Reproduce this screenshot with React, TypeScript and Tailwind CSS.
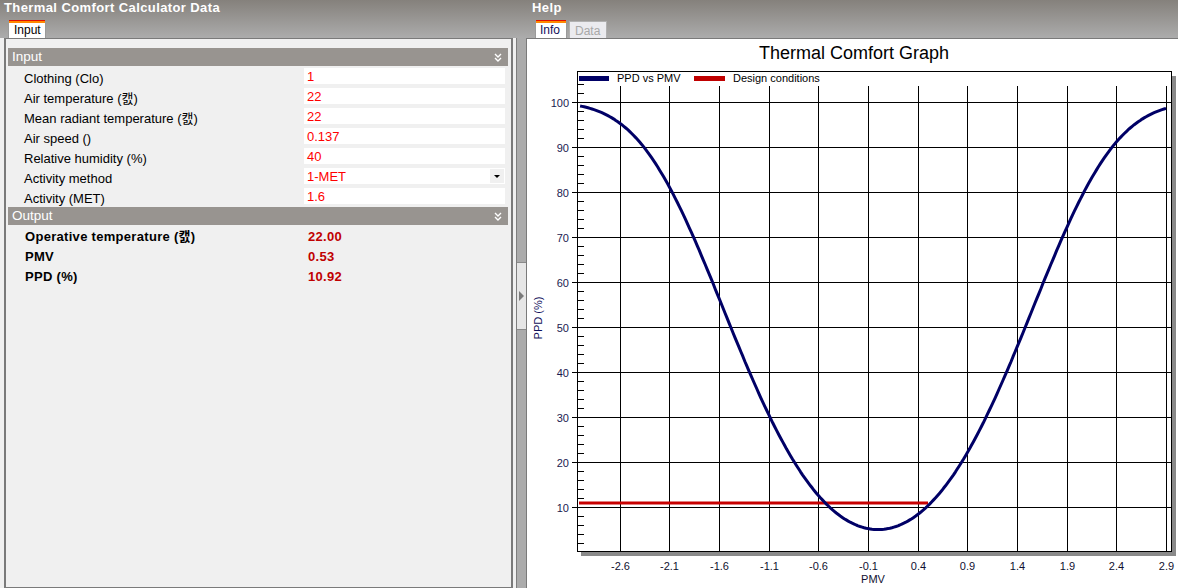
import React from "react";

const ppd = (p: number) => 100 - 95 * Math.exp(-0.03353 * p ** 4 - 0.2179 * p * p);
const X = (p: number) => 878 + 99.3 * p;
const Y = (v: number) => 552 - 4.5 * v;

function Chevron() {
  return (
    <svg width="8" height="9" viewBox="0 0 8 9" className="block">
      <path d="M1 1 L4 4 L7 1 M1 5 L4 8 L7 5" stroke="#ffffff" strokeWidth="1.4" fill="none" />
    </svg>
  );
}

function Chart() {
  const pts: string[] = [];
  for (let i = 0; i <= 295; i++) {
    const p = -3.0 + i * 0.02;
    pts.push(`${X(p).toFixed(1)},${Y(ppd(p)).toFixed(1)}`);
  }
  const xt = [-2.6, -2.1, -1.6, -1.1, -0.6, -0.1, 0.4, 0.9, 1.4, 1.9, 2.4, 2.9];
  const yt = [10, 20, 30, 40, 50, 60, 70, 80, 90, 100];
  const minor: number[] = [];
  for (let v = 2; v <= 104; v += 2) if (v % 10 !== 0) minor.push(v);
  return (
    <svg width="651" height="549" viewBox="527 39 651 549" className="block" style={{ fontFamily: "'Liberation Sans', Arial, sans-serif" }}>
      <text x="854" y="59" textAnchor="middle" fontSize="18" fill="#000">Thermal Comfort Graph</text>
      {/* shadow */}
      <rect x="1172" y="76" width="4" height="480" fill="#8a8a8a" />
      <rect x="581" y="552" width="595" height="4" fill="#8a8a8a" />
      {/* frame */}
      <rect x="577.5" y="71.5" width="594" height="480" fill="#fff" stroke="#000" strokeWidth="1" />
      {/* horizontal grid */}
      {yt.map((v) => (
        <g key={v}>
          <line x1="572" x2="1171.5" y1={Math.round(Y(v)) + 0.5} y2={Math.round(Y(v)) + 0.5} stroke="#000" strokeWidth="1" />
          <text x="569" y={Math.round(Y(v)) + 4.5} textAnchor="end" fontSize="11" fill="#1a1a50">{v}</text>
        </g>
      ))}
      {minor.map((v) => (
        <line key={v} x1="577" x2="584" y1={Math.round(Y(v)) + 0.5} y2={Math.round(Y(v)) + 0.5} stroke="#000" strokeWidth="1" />
      ))}
      {/* vertical grid */}
      {xt.map((p) => (
        <g key={p}>
          <line x1={Math.round(X(p)) + 0.5} x2={Math.round(X(p)) + 0.5} y1="86" y2="551.5" stroke="#000" strokeWidth="1" />
          <text x={Math.round(X(p)) + 0.5} y="570" textAnchor="middle" fontSize="11" fill="#101030">{p.toFixed(1)}</text>
        </g>
      ))}
      {/* legend */}
      <rect x="579" y="76" width="30" height="5" fill="#000066" />
      <text x="617" y="82" fontSize="11" fill="#000">PPD vs PMV</text>
      <rect x="694" y="76" width="31" height="5" fill="#c00000" />
      <text x="733" y="82" fontSize="11" fill="#000">Design conditions</text>
      {/* curves */}
      <line x1="579" x2="928" y1="503" y2="503" stroke="#c80000" strokeWidth="3" />
      <polyline points={pts.join(" ")} fill="none" stroke="#000066" strokeWidth="3" strokeLinejoin="round" />
      {/* axis titles */}
      <text x="873" y="583" textAnchor="middle" fontSize="11" fill="#101030">PMV</text>
      <text x="0" y="0" transform="translate(542 318) rotate(-90)" textAnchor="middle" fontSize="11" fill="#10105a">PPD (%)</text>
    </svg>
  );
}

const inputs: [string, string, boolean?][] = [
  ["Clothing (Clo)", "1"],
  ["Air temperature (캜)", "22"],
  ["Mean radiant temperature (캜)", "22"],
  ["Air speed ()", "0.137"],
  ["Relative humidity (%)", "40"],
  ["Activity method", "1-MET", true],
  ["Activity (MET)", "1.6"],
];

const outputs: [string, string][] = [
  ["Operative temperature (캜)", "22.00"],
  ["PMV", "0.53"],
  ["PPD (%)", "10.92"],
];

export default function App() {
  return (
    <div className="flex w-[1178px] h-[588px] overflow-hidden bg-[#f0f0f0] font-['Liberation_Sans','Noto_Sans_CJK_KR',Arial,sans-serif] text-[13px] text-black">
      {/* left column */}
      <div className="flex flex-col w-[514px] h-full">
        <div className="h-[38px] bg-gradient-to-b from-[#85817c] to-[#acacac] flex flex-col">
          <div className="h-[20px] pl-[4px] leading-[16px] font-bold text-white text-[13px] tracking-[0.4px]">Thermal Comfort Calculator Data</div>
          <div className="flex pl-[8px]">
            <div className="w-[38px] h-[18px] bg-white border-x border-[#9a9a9a] flex flex-col">
              <div className="h-[1px] bg-[#e01000]" />
              <div className="h-[2px] bg-[#ff8a00]" />
              <div className="pl-[5px] text-[12px] leading-[14px]">Input</div>
            </div>
          </div>
        </div>
        <div className="ml-[4px] w-[509px] flex-1 border-l-2 border-r-2 border-y border-[#7a7a7a] bg-[#f0f0f0] pt-[9px] pl-[2px] pr-[3px]">
          <div className="h-[18px] bg-[#989490] flex items-center justify-between pl-[4px] pr-[6px] text-white text-[13.5px]">
            <span>Input</span>
            <Chevron />
          </div>
          {inputs.map(([l, v, dd]) => (
            <div key={l} className="h-[20px] flex">
              <div className="w-[296px] pl-[16px] leading-[20px] pt-[3px]">{l}</div>
              <div className="mt-[2px] w-[201px] h-[16px] bg-white flex items-center justify-between">
                <span className="pl-[3px] text-[#ff0000] leading-[16px] pt-[1px]">{v}</span>
                {dd && (
                  <div className="w-[14px] h-[14px] bg-[#f0f0f0] flex items-center justify-center mr-[1px]">
                    <div className="w-0 h-0 border-l-[3px] border-r-[3px] border-t-[3px] border-l-transparent border-r-transparent border-t-black" />
                  </div>
                )}
              </div>
            </div>
          ))}
          <div className="mt-[1px] h-[18px] bg-[#989490] flex items-center justify-between pl-[4px] pr-[6px] text-white text-[13.5px]">
            <span>Output</span>
            <Chevron />
          </div>
          {outputs.map(([l, v]) => (
            <div key={l} className="h-[20px] flex font-bold leading-[20px] pt-[2px]">
              <div className="w-[300px] pl-[17px] tracking-[0.3px]">{l}</div>
              <div className="text-[#c00000] tracking-[0.3px]">{v}</div>
            </div>
          ))}
        </div>
      </div>
      {/* splitter */}
      <div className="flex flex-col w-[12px] h-full">
        <div className="h-[38px] bg-gradient-to-b from-[#85817c] to-[#acacac]" />
        <div className="flex-1 pl-[2px] bg-[#f0f0f0] flex">
          <div className="flex-1 bg-[#ababab] border-l border-[#7e7e7e] pt-[224px]">
            <div className="h-[68px] bg-[#e6e6e6] border-y border-[#8a8a8a] flex items-center justify-center">
              <div className="w-0 h-0 border-t-[5px] border-b-[5px] border-l-[5px] border-t-transparent border-b-transparent border-l-[#7a7a7a]" />
            </div>
          </div>
        </div>
      </div>
      {/* right column */}
      <div className="flex flex-col w-[652px] h-full">
        <div className="h-[38px] bg-gradient-to-b from-[#85817c] to-[#acacac] flex flex-col">
          <div className="h-[20px] pl-[6px] leading-[16px] font-bold text-white text-[13px] tracking-[0.4px]">Help</div>
          <div className="flex pl-[9px] gap-[2px] items-end h-[18px]">
            <div className="w-[32px] h-[18px] bg-white border-x border-[#9a9a9a] flex flex-col">
              <div className="h-[1px] bg-[#e01000]" />
              <div className="h-[2px] bg-[#ff8a00]" />
              <div className="pl-[4px] text-[12px] leading-[14px] text-[#10105a]">Info</div>
            </div>
            <div className="w-[38px] h-[17px] bg-[#ebebef] border border-b-0 border-[#b0b0b0] pl-[5px] pt-[2px] text-[12px] leading-[14px] text-[#a8a8a8]">Data</div>
          </div>
        </div>
        <div className="flex-1 border-l border-t border-[#7a7a7a] bg-white">
          <Chart />
        </div>
      </div>
    </div>
  );
}
